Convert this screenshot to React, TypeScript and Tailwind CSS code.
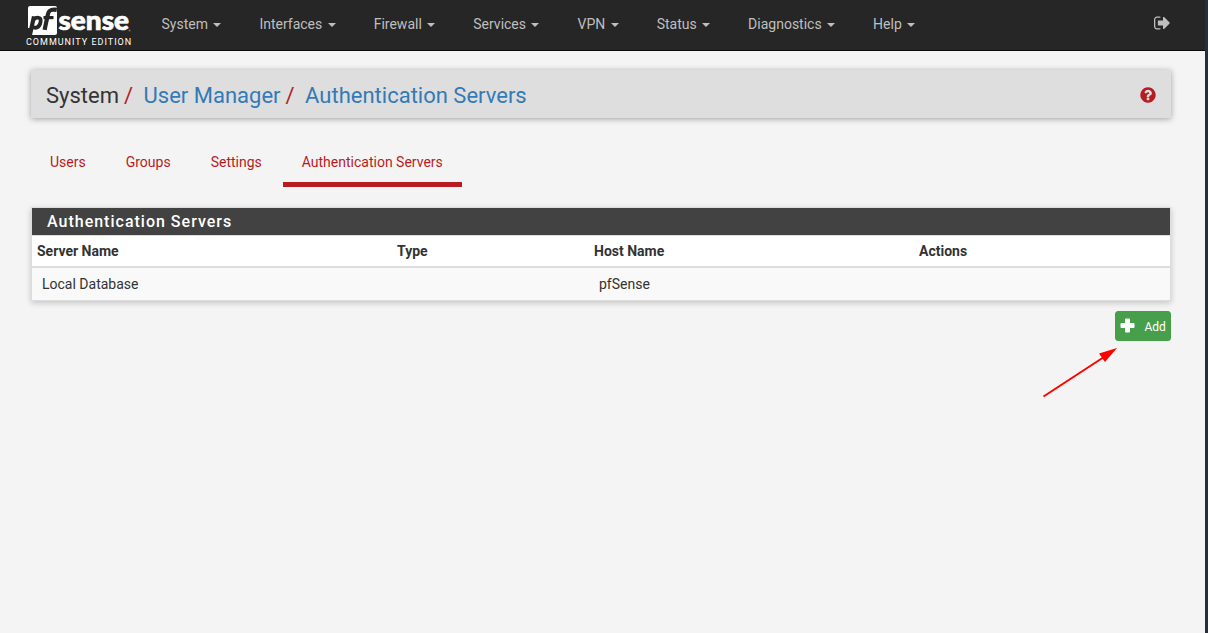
import React from "react";

const menus = ["System", "Interfaces", "Firewall", "Services", "VPN", "Status", "Diagnostics", "Help"];
const tabs = ["Users", "Groups", "Settings", "Authentication Servers"];

function Logo() {
  return (
    <a className="ml-[26px] block w-[107px] pt-1.5 text-white">
      <svg className="overflow-visible" width="107" height="30" viewBox="0 0 107 30">
        <path d="M4 0H29Q31 0 31 2V27Q31 29 29 29H5L6.500 22.500L2 22V2Q2 0 4 0z" fill="#fff" />
        <g stroke="#262626" fill="none">
          <path d="M3.800 29.500L8 10.400" strokeWidth="4.200" />
          <path d="M7.800 13.300C10.500 10.800 15.500 10.800 14.600 15.800C13.600 21.300 9.600 23.200 6.400 20.600" strokeWidth="3.800" />
          <path d="M18.600 23.900L21.800 8.600C22.700 4.200 25 3 30.800 3.900" strokeWidth="4.200" />
          <path d="M17.500 11.600H27.500" strokeWidth="3.200" />
        </g>
        <text x="32.500" y="23.700" textLength="70.500" lengthAdjust="spacingAndGlyphs" fill="#fff" stroke="#fff" strokeWidth="0.700" className="font-['Lato',sans-serif] text-[26px] leading-none font-black">sense</text>
        <circle cx="103.500" cy="24.500" r="1" fill="#777" />
      </svg>
      <span className="block text-[9px] leading-[12px] tracking-[1px] whitespace-nowrap">COMMUNITY EDITION</span>
    </a>
  );
}

function SignOutIcon() {
  return (
    <svg className="block" width="18" height="18" viewBox="0 0 1792 1792" fill="currentColor">
      <path d="M640 1440q0 4 1 20t.5 26.5-3 23.5-10 19.5-20.5 6.5h-320q-119 0-203.5-84.5t-84.5-203.5v-704q0-119 84.5-203.5t203.5-84.5h320q13 0 22.5 9.5t9.5 22.5q0 4 1 20t.5 26.5-3 23.5-10 19.5-20.5 6.5h-320q-66 0-113 47t-47 113v704q0 66 47 113t113 47h312l11.5 1 11.5 3 8 5.5 7 9 2 13.5zm928-544q0 26-19 45l-544 544q-19 19-45 19t-45-19-19-45v-288h-448q-26 0-45-19t-19-45v-384q0-26 19-45t45-19h448v-288q0-26 19-45t45-19 45 19l544 544q19 19 19 45z" />
    </svg>
  );
}

function HelpIcon() {
  return (
    <svg className="block" width="18" height="18" viewBox="0 0 1792 1792" fill="currentColor">
      <path d="M1024 1376v-192q0-14-9-23t-23-9h-192q-14 0-23 9t-9 23v192q0 14 9 23t23 9h192q14 0 23-9t9-23zm256-672q0-88-55.5-163t-138.500-116-170.500-41q-243 0-371 213-15 24 8 42l132 100q7 6 19 6 16 0 25-12 53-68 86-92 34-24 86-24 48 0 85.500 26t37.500 59q0 38-20 61t-68 45q-63 28-115.500 86.500t-52.500 125.500v36q0 14 9 23t23 9h192q14 0 23-9t9-23q0-19 21.500-49.500t54.500-49.500q32-18 49-28.500t46-35 44.500-48 28-60.500 12.500-81zm384 192q0 209-103 385.500t-279.500 279.500-385.500 103-385.500-103-279.500-279.500-103-385.500 103-385.500 279.500-279.500 385.500-103 385.500 103 279.500 279.500 103 385.500z" />
    </svg>
  );
}

function PlusIcon() {
  return (
    <svg className="block" width="15" height="15" viewBox="0 0 15 15" fill="#fff">
      <path d="M6 .5h3a1 1 0 0 1 1 1V5h3.500a1 1 0 0 1 1 1v3a1 1 0 0 1-1 1H10v3.500a1 1 0 0 1-1 1H6a1 1 0 0 1-1-1V10H1.500a1 1 0 0 1-1-1V6a1 1 0 0 1 1-1H5V1.500a1 1 0 0 1 1-1z" />
    </svg>
  );
}

export default function App() {
  return (
    <div className="relative flex h-[633px] w-[1208px] flex-col overflow-hidden border-r-[3px] border-[#25303a] bg-[#f4f4f4] font-['Roboto',sans-serif] text-sm leading-5 text-[#333]">
      <header className="flex h-[51px] shrink-0 border-b border-[#080808] bg-[#262626] text-[#bfbfbf]">
        <Logo />
        <nav className="ml-[9.5px] flex">
          {menus.map((m) => (
            <a key={m} className="flex items-center px-[19px] pb-[3px]">
              {m}
              <span className="mt-[2px] ml-[5.45px] h-0 w-0 border-x-4 border-t-4 border-x-transparent border-t-[#bfbfbf]" />
            </a>
          ))}
        </nav>
        <div className="mt-[14px] mr-[33px] ml-auto"><SignOutIcon /></div>
      </header>

      <div className="mr-[34px] ml-[31px] mt-[19px] flex h-12 shrink-0 items-center bg-[#dedede] pr-4 pl-[15px] text-[22px] leading-6 shadow-[0_1px_6px_rgba(0,0,0,0.35)]">
        <span className="pt-[3px]">System</span>
        <span className="ml-[5px] pt-[3px] text-[#b71c23]">/</span>
        <a className="ml-[10.5px] pt-[3px] text-[#337ab7]">User Manager</a>
        <span className="ml-[5px] pt-[3px] text-[#b71c23]">/</span>
        <a className="ml-[10.5px] pt-[3px] text-[#337ab7]">Authentication Servers</a>
        <span className="mt-px -mr-0.5 ml-auto text-[#b71c23]"><HelpIcon /></span>
      </div>

      <nav className="mt-[24px] ml-[31px] flex h-[45px] shrink-0 text-[#b71c23]">
        {tabs.map((t, i) => (
          <a key={t} className={i === 3 ? "border-b-[5px] border-[#b71c23] px-[19px] pt-[10px]" : "mr-[2px] px-[19px] pt-[10px]"}>{t}</a>
        ))}
      </nav>

      <section className="mt-5 mr-[34px] ml-[31px] shrink-0 border border-[#ddd] bg-white shadow-[0_2px_6px_rgba(0,0,0,0.2)]">
        <h2 className="h-[27px] bg-[#424242] pl-[15px] text-base leading-[27px] font-medium tracking-[1px] text-white">Authentication Servers</h2>
        <table className="w-full table-fixed border-t border-[#ddd] text-left">
          <colgroup>
            <col className="w-[360px]" />
            <col className="w-[197px]" />
            <col className="w-[325px]" />
            <col />
          </colgroup>
          <thead>
            <tr className="h-[31px] border-b-2 border-[#ddd]">
              {["Server Name", "Type", "Host Name", "Actions"].map((h) => (
                <th key={h} className="px-[5px] pt-px font-bold">{h}</th>
              ))}
            </tr>
          </thead>
          <tbody>
            <tr className="h-[33px] bg-[#f9f9f9]">
              <td className="px-2.5">Local Database</td>
              <td />
              <td className="px-2.5">pfSense</td>
              <td />
            </tr>
          </tbody>
        </table>
      </section>

      <button className="mt-[10px] mr-[34px] flex h-[30px] w-14 shrink-0 items-center self-end rounded-[3px] border border-[#43a047] bg-[#479f4c] pl-[3.5px] text-xs text-white">
        <PlusIcon />
        <span className="ml-[10px] pt-[2px]">Add</span>
      </button>

      <svg className="absolute top-[340px] left-[1036px]" width="90" height="64" viewBox="0 0 90 64">
        <path d="M7.500 56.500L68 17" stroke="#f00" strokeWidth="2" />
        <path d="M81 8L69 22L63 13.500z" fill="#f00" />
      </svg>
    </div>
  );
}
